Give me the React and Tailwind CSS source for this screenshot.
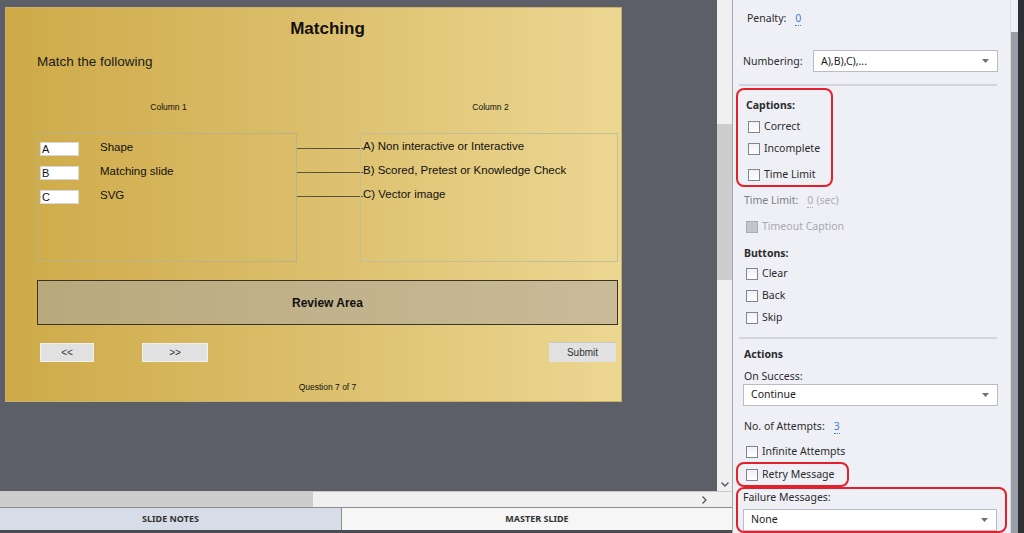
import React from 'react';

const slideFont = { fontFamily: '"Liberation Sans", Arial, sans-serif' };
const panelFont = { fontFamily: '"Noto Sans", "Open Sans", sans-serif' };

function Checkbox({ label, disabled }) {
  return (
    <div className="flex items-center h-[20px] pl-[13px]">
      <span
        className={
          disabled
            ? 'w-[12px] h-[12px] border border-[#a9acb4] bg-[#c4c5c9]'
            : 'w-[12px] h-[12px] border border-[#7f8596] bg-gradient-to-b from-[#f1f1f4] to-[#ffffff]'
        }
      />
      <span className={disabled ? 'ml-[4px] text-[#a7a9ad]' : 'ml-[4px] text-[#2b2b2b]'}>{label}</span>
    </div>
  );
}

function Select({ value, className }) {
  return (
    <div className={'h-[22px] bg-white border border-[#b9bcc7] flex items-center justify-between pl-[7px] pr-[8px] ' + className}>
      <span className="text-[#222]">{value}</span>
      <svg width="7" height="4" viewBox="0 0 7 4">
        <path d="M0 0h7L3.5 4z" fill="#6b7080" />
      </svg>
    </div>
  );
}

function Label({ children, className = '' }) {
  return <div className={'flex items-center h-[20px] ' + className}>{children}</div>;
}

function Value({ children, muted }) {
  return (
    <span
      className={
        muted
          ? 'ml-[9px] text-[#a9abb0] border-b border-dotted border-[#a9abb0] leading-[13px]'
          : 'ml-[9px] text-[#3d7fd8] border-b border-dotted border-[#3d7fd8] leading-[13px]'
      }
    >
      {children}
    </span>
  );
}

function Slide() {
  const left = [
    ['A', 'Shape'],
    ['B', 'Matching slide'],
    ['C', 'SVG'],
  ];
  const right = ['A) Non interactive or Interactive', 'B) Scored, Pretest or Knowledge Check', 'C) Vector image'];
  return (
    <div
      className="w-[617px] h-[395px] border border-[#c9b16a] bg-gradient-to-r from-[#ceaa47] via-[#dcbf6c] to-[#ecd792] pl-[31px] pr-[3px] flex flex-col text-[#111]"
      style={slideFont}
    >
      <div className="mt-[10px] h-[22px] text-center text-[17px] font-bold leading-[22px]">Matching</div>
      <div className="mt-[13px] h-[18px] text-[13.5px] leading-[18px] text-[#1a1a1a]">Match the following</div>
      <div className="mt-[30px] h-[12px] flex text-[8.5px] leading-[12px]">
        <div className="w-[260px] text-center pl-[3px]">Column 1</div>
        <div className="w-[63px]" />
        <div className="w-[258px] text-center pl-[3px]">Column 2</div>
      </div>
      <div className="mt-[20px] h-[129px] flex">
        <div className="w-[260px] h-full border border-[#b8b487] pt-[8px] pl-[2px]">
          {left.map(([k, t]) => (
            <div key={k} className="h-[24px] flex items-start text-[11.5px]">
              <div className="w-[39px] h-[14px] bg-white border border-[#d8d8d8] leading-[12px] text-[11px] pl-[1px]">{k}</div>
              <div className="ml-[21px] -mt-[2px] leading-[14px]">{t}</div>
            </div>
          ))}
        </div>
        <div className="w-[63px] flex flex-col pt-[15px]">
          {right.map((r) => (
            <div key={r} className="h-[24px]">
              <div className="h-[1px] w-[66px] bg-[#5c5641]" />
            </div>
          ))}
        </div>
        <div className="w-[258px] h-full border border-[#bfbf9a] pt-[5px] pl-[2px] text-[11.5px]">
          {right.map((r) => (
            <div key={r} className="h-[24px] leading-[14px]">
              {r}
            </div>
          ))}
        </div>
      </div>
      <div className="mt-[18px] h-[45px] border border-[#3a3422] bg-gradient-to-r from-[#b8a97d] to-[#c9bb98] flex items-center justify-center text-[12px] font-bold">
        Review Area
      </div>
      <div className="mt-[17px] h-[20px] flex items-start text-[10px] text-[#333]">
        <div className="ml-[3px] mt-[1px] w-[54px] h-[19px] bg-[#e1e1e1] border border-[#f0f0f0] flex items-center justify-center">&lt;&lt;</div>
        <div className="ml-[48px] mt-[1px] w-[66px] h-[19px] bg-[#e1e1e1] border border-[#f0f0f0] flex items-center justify-center">&gt;&gt;</div>
        <div className="ml-auto mr-[2px] w-[67px] h-[20px] bg-[#e1e1e1] border-t border-[#c9c9c9] flex items-center justify-center">Submit</div>
      </div>
      <div className="mt-[20px] h-[10px] text-center text-[8.5px] leading-[10px] text-[#111]">Question 7 of 7</div>
    </div>
  );
}

export default function App() {
  return (
    <div className="w-[1024px] h-[533px] flex bg-[#5c5f67] overflow-hidden">
      {/* stage */}
      <div className="w-[732px] h-full flex flex-col">
        <div className="flex-1 flex min-h-0">
          <div className="flex-1 pl-[5px] pt-[7px]">
            <Slide />
          </div>
          <div className="w-[15px] h-full bg-[#f0f0f0] flex flex-col items-center">
            <div className="mt-[124px] w-[15px] h-[156px] bg-[#cdcdcd]" />
            <div className="mt-auto mb-[4px] text-[#555] text-[10px] leading-[10px]">
              <svg width="8" height="5" viewBox="0 0 8 5">
                <path d="M0.5 0.5l3.5 3.5 3.5-3.5" stroke="#555" strokeWidth="1.3" fill="none" />
              </svg>
            </div>
          </div>
        </div>
        <div className="h-[16px] flex bg-[#f0f0f0] border-t border-[#c8c8c8]">
          <div className="w-[313px] h-full bg-[#cdcdcd]" />
          <div className="w-[395px] flex justify-end items-center pr-[1px]">
            <svg width="5" height="8" viewBox="0 0 5 8">
              <path d="M0.5 0.5l3.5 3.5-3.5 3.5" stroke="#555" strokeWidth="1.3" fill="none" />
            </svg>
          </div>
        </div>
        <div className="h-[23px] flex border-t border-[#8d8d8d] text-[9px] font-bold text-[#333]" style={panelFont}>
          <div className="w-[342px] bg-[#d7dde8] border-r border-[#8d8d8d] flex items-center justify-center">SLIDE NOTES</div>
          <div className="flex-1 bg-[#f6f6f6] flex items-center justify-center">MASTER SLIDE</div>
        </div>
        <div className="h-[3px] bg-[#4a4c52]" />
      </div>

      {/* properties panel */}
      <div className="w-[278px] h-full bg-[#eff0f6] border-l border-[#a3a7b2] text-[10.5px] text-[#2b2b2b] flex flex-col" style={panelFont}>
        <Label className="mt-[9px] pl-[14px]">
          <span>Penalty:</span>
          <Value>0</Value>
        </Label>
        <div className="mt-[22px] h-[22px] flex items-center pl-[10px] pr-[12px]">
          <span className="w-[70px]">Numbering:</span>
          <Select value="A),B),C),..." className="flex-1" />
        </div>
        <div className="mt-[12px] mx-[6px] w-[258px] h-[2px] bg-[#d3d4dc]" />
        <div className="mt-[2px] ml-[3px] w-[97px] h-[99px] border-2 border-[#e3202b] rounded-[8px] flex flex-col">
          <div className="mt-[6px] h-[20px] flex items-center pl-[8px] font-bold">Captions:</div>
          <div className="-ml-[3px] mt-[1px]">
            <Checkbox label="Correct" />
            <div className="mt-[2px]">
              <Checkbox label="Incomplete" />
            </div>
            <div className="mt-[6px]">
              <Checkbox label="Time Limit" />
            </div>
          </div>
        </div>
        <Label className="mt-[4px] pl-[11px] text-[#7d7f85]">
          <span>Time Limit:</span>
          <Value muted>0</Value>
          <span className="ml-[3px] text-[#a9abb0]">(sec)</span>
        </Label>
        <div className="mt-[6px]">
          <Checkbox label="Timeout Caption" disabled />
        </div>
        <Label className="mt-[7px] pl-[11px] font-bold">Buttons:</Label>
        <div className="mt-[1px]">
          <Checkbox label="Clear" />
        </div>
        <div className="mt-[2px]">
          <Checkbox label="Back" />
        </div>
        <div className="mt-[2px]">
          <Checkbox label="Skip" />
        </div>
        <div className="mt-[9px] mx-[6px] w-[258px] h-[2px] bg-[#d3d4dc]" />
        <Label className="mt-[6px] pl-[11px] font-bold">Actions</Label>
        <div className="mt-[4px] h-[16px] flex items-center pl-[11px]">On Success:</div>
        <div className="mt-[0px] pl-[10px] pr-[12px]">
          <Select value="Continue" />
        </div>
        <Label className="mt-[11px] pl-[11px]">
          <span>No. of Attempts:</span>
          <Value>3</Value>
        </Label>
        <div className="mt-[5px]">
          <Checkbox label="Infinite Attempts" />
        </div>
        <div className="ml-[3px] w-[113px] h-[26px] border-2 border-[#e3202b] rounded-[8px] flex items-center pt-[1px]">
          <div className="-ml-[5px]">
            <Checkbox label="Retry Message" />
          </div>
        </div>
        <div className="ml-[3px] w-[271px] h-[47px] border-2 border-[#e3202b] rounded-[8px] flex flex-col pl-[5px] pr-[8px]">
          <div className="mt-[1px] h-[16px] flex items-center">Failure Messages:</div>
          <Select value="None" className="mt-[3px]" />
        </div>
      </div>

      {/* right scrollbar */}
      <div className="w-[8px] h-full bg-[#eff0f6] border-l border-[#dcdde4] flex flex-col">
        <div className="mt-[32px] flex-1 bg-[#9a9ea9]" />
      </div>
      <div className="w-[6px] h-full bg-[#2f3033]" />
    </div>
  );
}
